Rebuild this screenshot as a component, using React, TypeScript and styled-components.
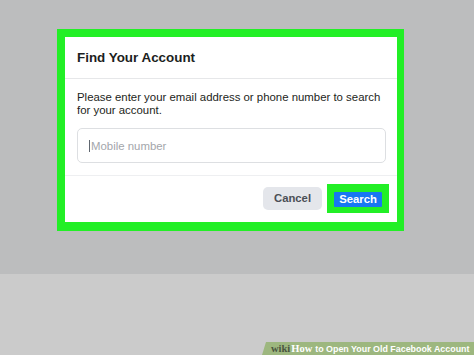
import React from "react";
import styled, { createGlobalStyle } from "styled-components";

const Global = createGlobalStyle`
  html, body { margin: 0; padding: 0; }
  body { width: 474px; height: 355px; overflow: hidden; font-family: "Liberation Sans", Arial, sans-serif; background: #cbcbcb; }
`;

const Page = styled.div`
  position: relative;
  width: 474px;
  height: 355px;
  display: flex;
  flex-direction: column;
`;

const Stage = styled.div`
  height: 274px;
  background: #bcbdbe;
  padding: 29px 0 0 57px;
  box-sizing: border-box;
`;

const Floor = styled.div`
  flex: 1;
  background: #cbcbcb;
`;

const Highlight = styled.div`
  display: inline-block;
  border-style: solid;
  border-color: #22ef26;
  border-width: 8px 7px 9px 8px;
`;

const Card = styled.div`
  width: 332px;
  height: 185px;
  background: #ffffff;
  display: flex;
  flex-direction: column;
`;

const Header = styled.div`
  height: 42px;
  box-sizing: border-box;
  border-bottom: 1px solid #e6e7e9;
  display: flex;
  align-items: center;
  padding: 0 12px;
`;

const Title = styled.h2`
  margin: 0;
  font-size: 13.4px;
  font-weight: 700;
  color: #1c1e21;
`;

const Body = styled.div`
  padding: 12px 11px 12px 12px;
  border-bottom: 1px solid #eeeff1;
  height: 97px;
  box-sizing: border-box;
`;

const Text = styled.p`
  margin: 0 0 11px 0;
  font-size: 11.4px;
  line-height: 13px;
  color: #1c1e21;
`;

const Field = styled.div`
  height: 35px;
  box-sizing: border-box;
  border: 1px solid #dddfe2;
  border-radius: 5px;
  display: flex;
  align-items: center;
  padding-left: 11px;
`;

const Caret = styled.span`
  width: 1px;
  height: 12px;
  background: #606770;
  margin-right: 1px;
`;

const Placeholder = styled.span`
  font-size: 11.4px;
  color: #a3a6ab;
`;

const Footer = styled.div`
  flex: 1;
  display: flex;
  justify-content: flex-end;
  align-items: center;
  gap: 5px;
  padding: 0 8px 1px 0;
`;

const Button = styled.button<{ $primary?: boolean }>`
  border: none;
  margin: 0;
  font-family: "Liberation Sans", Arial, sans-serif;
  font-weight: 700;
  font-size: 11.3px;
  border-radius: ${(p) => (p.$primary ? "1px" : "5px")};
  background: ${(p) => (p.$primary ? "#1877f2" : "#e4e6eb")};
  color: ${(p) => (p.$primary ? "#ffffff" : "#4b4f56")};
  width: ${(p) => (p.$primary ? "48px" : "59px")};
  height: ${(p) => (p.$primary ? "15px" : "23px")};
  padding: 0;
  line-height: 1;
`;

const SearchHighlight = styled.div`
  background: #22ef26;
  padding: 8px 7px 6px 7px;
  display: flex;
`;

const Watermark = styled.div`
  position: absolute;
  right: 0;
  bottom: 0;
  height: 13px;
  width: 212px;
  background: #9db77f;
  clip-path: polygon(4px 0, 100% 0, 100% 100%, 0 100%);
  display: flex;
  align-items: center;
  padding-left: 9px;
  box-sizing: border-box;
  font-size: 8.9px;
  font-weight: 700;
  white-space: nowrap;
  color: #ffffff;
`;

const Wiki = styled.span`
  font-family: "Liberation Serif", "Times New Roman", serif;
  color: #4a5540;
  font-size: 10.5px;
  margin-right: 1px;
`;

const How = styled.span`
  font-family: "Liberation Serif", "Times New Roman", serif;
  font-size: 10.5px;
  margin-right: 3px;
`;

export default function App() {
  return (
    <Page>
      <Global />
      <Stage>
        <Highlight>
          <Card>
            <Header>
              <Title>Find Your Account</Title>
            </Header>
            <Body>
              <Text>
                Please enter your email address or phone number to search for your account.
              </Text>
              <Field>
                <Caret />
                <Placeholder>Mobile number</Placeholder>
              </Field>
            </Body>
            <Footer>
              <Button>Cancel</Button>
              <SearchHighlight>
                <Button $primary>Search</Button>
              </SearchHighlight>
            </Footer>
          </Card>
        </Highlight>
      </Stage>
      <Floor />
      <Watermark>
        <Wiki>wiki</Wiki>
        <How>How</How>
        to Open Your Old Facebook Account
      </Watermark>
    </Page>
  );
}
